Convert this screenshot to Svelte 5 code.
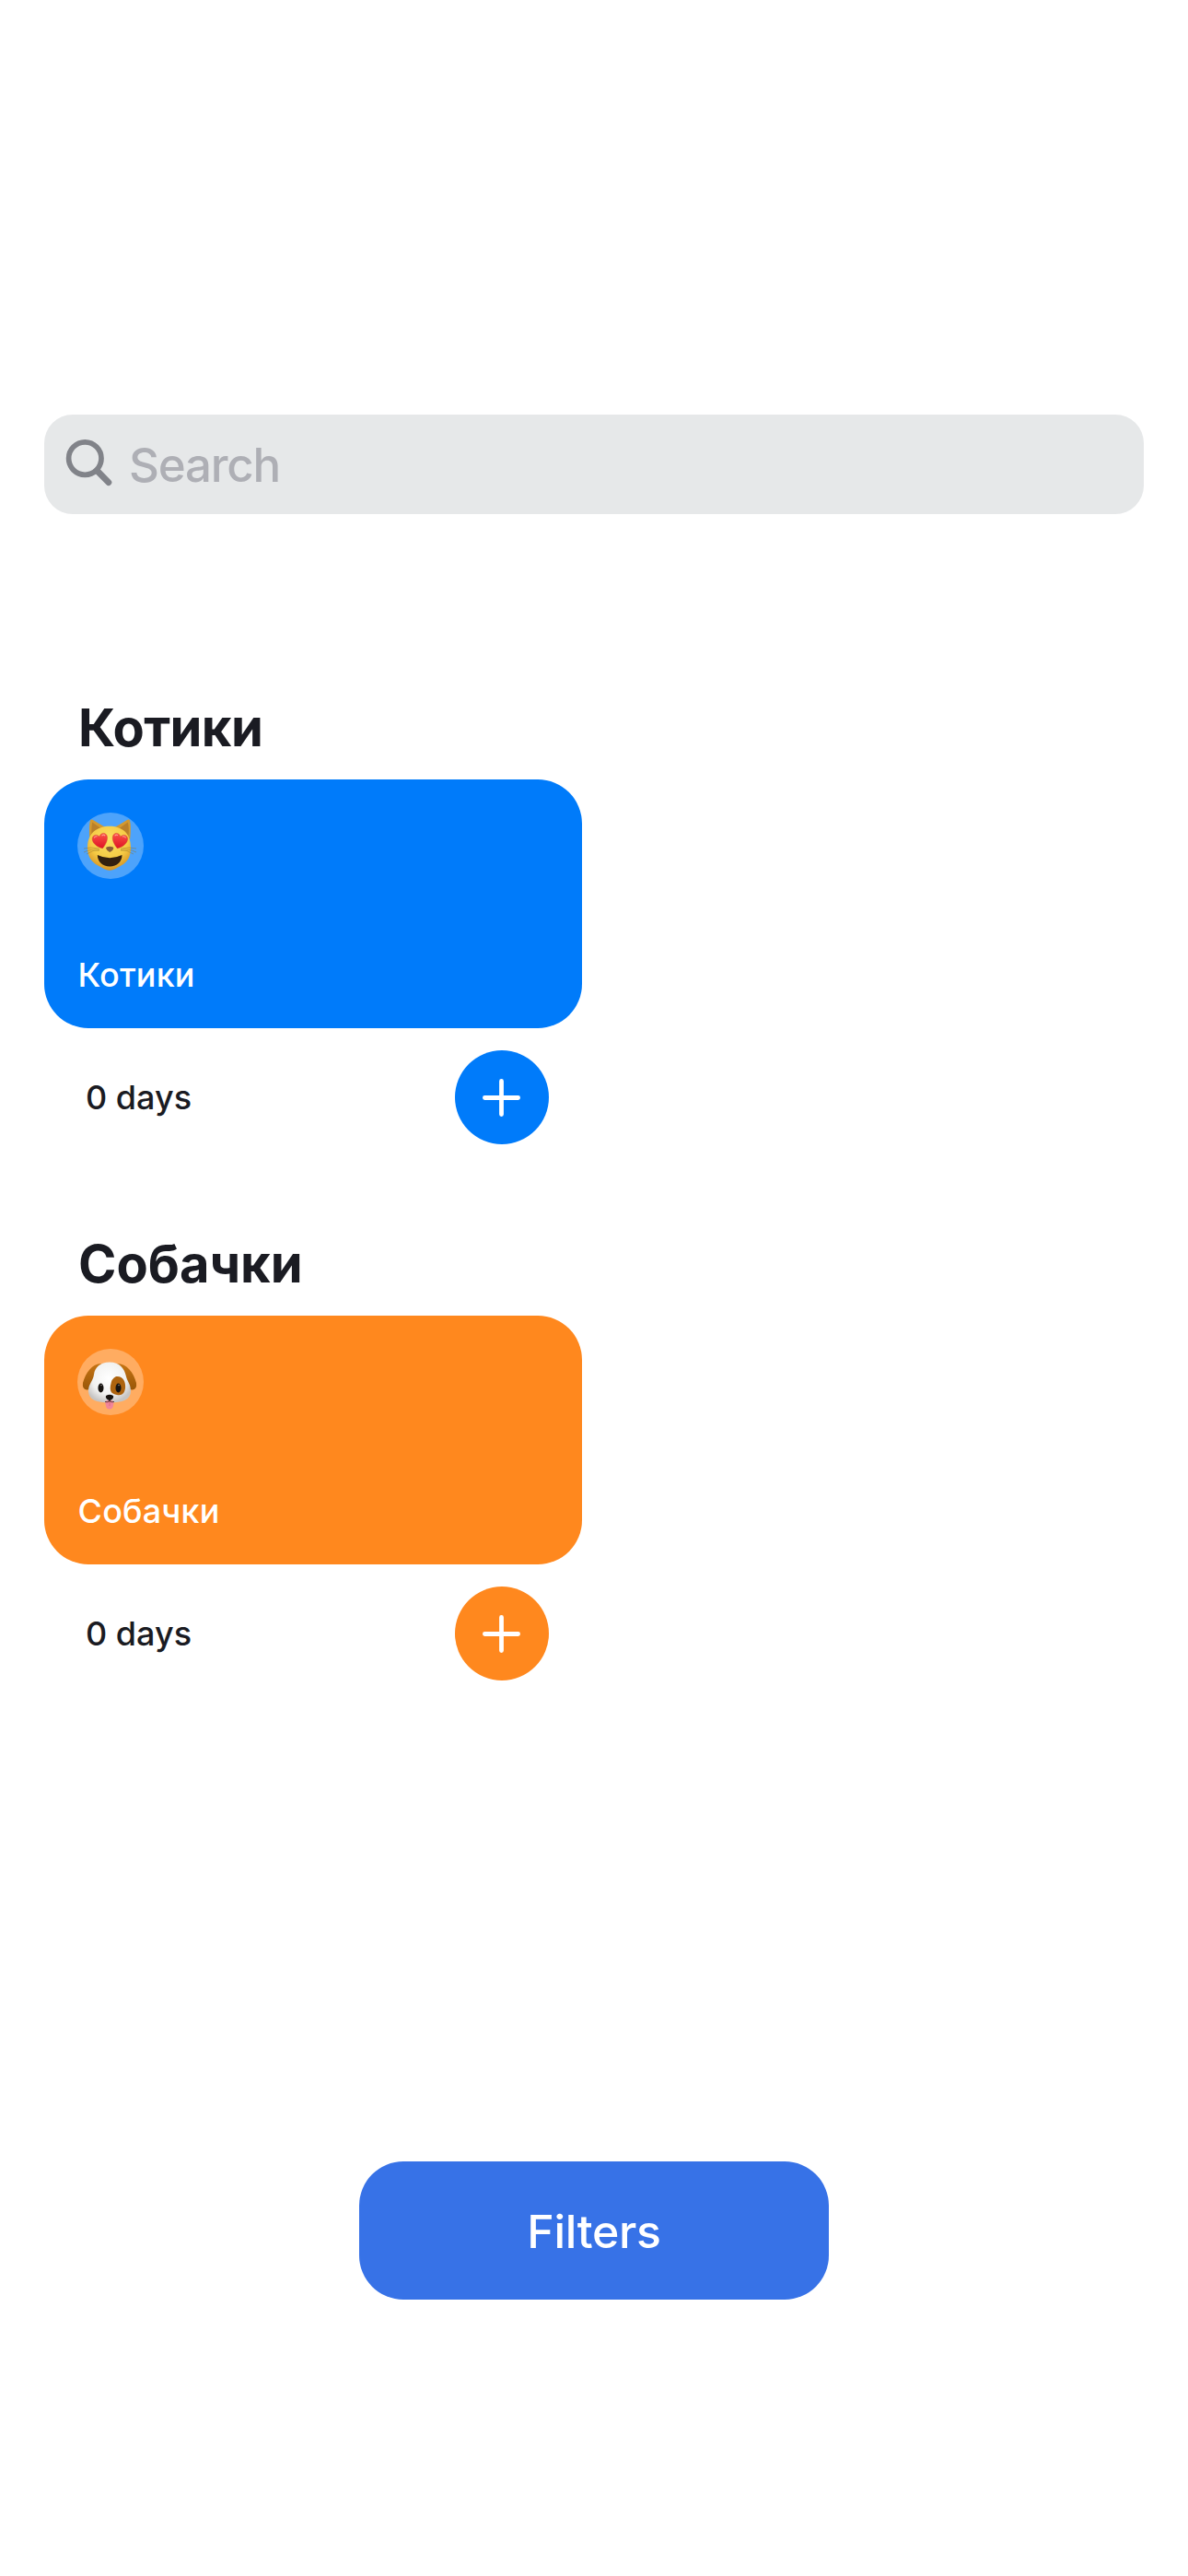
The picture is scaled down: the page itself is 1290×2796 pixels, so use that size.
<script>
  const categories = [
    { name: 'Котики', kind: 'cat', tone: 'blue', days: 0 },
    { name: 'Собачки', kind: 'dog', tone: 'orange', days: 0 }
  ];
</script>

{#snippet cat()}
  <svg class="emoji" viewBox="0 0 72 72" aria-label="Cat">
    <defs>
      <radialGradient id="cat-face" cx=".5" cy=".3" r=".72">
        <stop offset="0" stop-color="#fbe062" />
        <stop offset=".6" stop-color="#f6cb45" />
        <stop offset="1" stop-color="#d38f22" />
      </radialGradient>
      <linearGradient id="cat-heart" x1="0" y1="0" x2="0" y2="1">
        <stop offset="0" stop-color="#fb5148" />
        <stop offset="1" stop-color="#df1425" />
      </linearGradient>
    </defs>
    <path d="M13.300 29 Q12.300 14 14.200 8 Q15 6.800 17 8 L32 17 ZM57.200 29 Q58.700 14 56.800 8 Q56 6.800 54 8 L39 17 Z" fill="#d3992f" />
    <path d="M15.500 25 Q15 16 16.300 10.500 L26 17.500 ZM55.500 25 Q56.500 16 54.700 10.500 L45 17.500 Z" fill="#b9802a" />
    <path d="M35 14.700 C48 14.700 58 22 58 37.500 C58 47.500 55 53.500 47.500 57.500 C43 60 39.500 62.700 35 62.700 C30.500 62.700 27 60 22.500 57.500 C15 53.500 11 47.500 11 37.500 C11 22 22 14.700 35 14.700Z" fill="url(#cat-face)" />
    <path d="M7 39 Q15 37 24 39 M7 43 Q16 38.500 24 40.500 M10 45 Q17 40 24 41 M64 39 Q56 37 47 39 M64 43 Q55 38.500 47 40.500 M61 45 Q54 40 47 41" fill="none" stroke="#927023" stroke-opacity=".75" stroke-width=".6" />
    <g fill="url(#cat-heart)" stroke="#c8392a" stroke-width=".4">
      <path d="M27.500 38.700 C21.500 37.500 16 33 16.200 28.200 C16.500 24 21.500 23.200 24 26.200 C24.800 22.300 29.500 20.900 31.700 24.300 C34 28.300 31 34.500 27.500 38.700Z" />
      <path d="M43.300 38.700 C49.300 37.500 54.800 33 54.600 28.200 C54.300 24 49.300 23.200 46.800 26.200 C46 22.300 41.300 20.900 39.100 24.300 C36.800 28.300 39.800 34.500 43.300 38.700Z" />
    </g>
    <path d="M18.500 27 Q19.500 25.500 21 25.800 M27 24.800 Q28.500 23.600 29.800 24.800 M41 24.800 Q42 23.600 43.500 24.500 M49.500 25.800 Q51.500 25.500 52.300 27" fill="none" stroke="#ff9b8d" stroke-width="1.200" stroke-linecap="round" />
    <path d="M31 38.500 Q31.500 36.800 35.200 36.800 Q39 36.800 39.300 38.500 Q39 41 35.200 43 Q31.500 41 31 38.500Z" fill="#875e38" />
    <path d="M21.800 46 Q35.200 52.500 48.500 46 C48.500 53.500 43 58.500 35.200 58.500 C27.500 58.500 22 53.500 21.800 46Z" fill="#33200f" />
  </svg>
{/snippet}

{#snippet dog()}
  <svg class="emoji" viewBox="0 0 72 72" aria-label="Dog">
    <defs>
      <radialGradient id="dog-face" cx=".48" cy=".4" r=".6">
        <stop offset="0" stop-color="#fff" />
        <stop offset=".65" stop-color="#f2f2f1" />
        <stop offset="1" stop-color="#c6c4c3" />
      </radialGradient>
      <linearGradient id="dog-ear" x1="0" y1="0" x2="0" y2="1">
        <stop offset="0" stop-color="#c57413" />
        <stop offset="1" stop-color="#9a5708" />
      </linearGradient>
    </defs>
    <path d="M26 16 C16 16 9 26 6 37 Q5 44 10 44.500 Q16 45 18 37ZM43 16 C54 16 61 26 64 37 Q65 44 60 44.500 Q54 45 52 37Z" fill="url(#dog-ear)" />
    <path d="M35 14.500 C46 14.500 51 21 53 30 C54 35 58 38 58 46 C58 55 49 58.500 35 58.500 C21 58.500 12 55 12 46 C12 38 17 35 18 28 C19 20 25 14.500 35 14.500Z" fill="url(#dog-face)" />
    <path d="M42 30 C49 29 53 35 52 43 C51 48 49 51 43 50 C37 49 35 46 36 40 Q37 32 42 30Z" fill="#ad630f" />
    <ellipse cx="25.500" cy="42.500" rx="3" ry="5" fill="#171311" />
    <ellipse cx="44.500" cy="42.500" rx="3" ry="5" fill="#171311" />
    <circle cx="26" cy="39.500" r=".8" fill="#85817e" />
    <circle cx="45" cy="39.500" r=".8" fill="#85817e" />
    <path d="M30 57 Q35 54 39.500 57 L39 62 Q38 65.500 35 65.500 Q31.500 65.500 31 62Z" fill="#f28599" />
    <path d="M35 57 V62" stroke="#d86679" stroke-width=".8" />
    <path d="M31 51 Q35 48.500 39 51 Q40 54 35.500 56 L35 58 L34.500 56 Q30 54 31 51Z" fill="#17120f" />
    <path d="M30 57.500 Q33 58.500 35 56.500 Q37 58.500 40 57.500" fill="none" stroke="#332722" stroke-width=".8" />
  </svg>
{/snippet}

<main>
  <label class="search">
    <svg viewBox="0 0 54 54" aria-hidden="true">
      <circle cx="22.300" cy="25.600" r="17.700" />
      <path d="M35.500 39 L47.900 51.600" />
    </svg>
    <span>Search</span>
  </label>

  <div class="list">
    {#each categories as item}
      <section class={item.tone}>
        <h2 class={item.kind}>{item.name}</h2>
        <article>
          <div class="badge">
            {#if item.kind === 'cat'}{@render cat()}{:else}{@render dog()}{/if}
          </div>
          <p>{item.name}</p>
        </article>
        <footer>
          <span>{item.days} days</span>
          <button class="add" aria-label="Add day">
            <svg viewBox="0 0 102 102"><path d="M32.400 51.500 H68.600 M50.500 33.400 V69.600" /></svg>
          </button>
        </footer>
      </section>
    {/each}
  </div>

  <button class="filters">Filters</button>
</main>

<style>
  :global(body) {
    margin: 0;
    background: #fff;
  }
  main {
    box-sizing: border-box;
    width: 1290px;
    height: 2796px;
    padding: 450px 48px 300px;
    display: flex;
    flex-direction: column;
    background: #fff;
    color: #1a1b22;
    font-family: Inter, 'Liberation Sans', sans-serif;
  }
  button {
    border: 0;
    padding: 0;
    font: inherit;
  }
  .search {
    box-sizing: border-box;
    height: 108px;
    border-radius: 31px;
    padding-left: 22px;
    display: flex;
    align-items: center;
    background: #e6e8e9;
    color: #aeafb5;
    font-size: 51px;
    line-height: 62px;
    font-weight: 450;
  }
  .search svg {
    width: 54px;
    height: 54px;
    margin-top: -10px;
    overflow: visible;
    fill: none;
    stroke: #818389;
    stroke-width: 5.7;
    stroke-linecap: round;
  }
  .search path {
    stroke-width: 6.8;
  }
  .search span {
    margin: 2px 0 0 16px;
    letter-spacing: -1.2px;
  }
  .list {
    margin-top: 198px;
    display: flex;
    flex-direction: column;
  }
  section {
    width: 584px;
    height: 582px;
    display: flex;
    flex-direction: column;
  }
  .blue { --tone: #007bfa; }
  .orange { --tone: #ff881e; }
  h2 {
    box-sizing: border-box;
    height: 90px;
    margin: 0;
    padding: 0 0 0 37px;
    font-size: 56px;
    line-height: 68px;
    font-weight: 700;
  }
  h2.cat {
    letter-spacing: -0.6px;
  }
  article {
    box-sizing: border-box;
    height: 270px;
    padding: 36px 36px 37px;
    border-radius: 48px;
    display: flex;
    flex-direction: column;
    justify-content: space-between;
    background: var(--tone);
    color: #fff;
  }
  .badge {
    width: 72px;
    height: 72px;
    border-radius: 50%;
    background: rgb(255 255 255 / 30%);
  }
  .emoji {
    display: block;
    width: 72px;
    height: 72px;
  }
  p {
    margin: 0;
    padding-left: 0.6px;
    font-size: 36px;
    line-height: 42px;
    font-weight: 500;
    letter-spacing: 0.15px;
  }
  footer {
    margin-top: 24px;
    height: 102px;
    padding: 0 36px;
    display: flex;
    align-items: center;
    justify-content: space-between;
    font-size: 36px;
    line-height: 42px;
    font-weight: 500;
  }
  footer span {
    padding-left: 9px;
  }
  .add {
    width: 102px;
    height: 102px;
    border-radius: 50%;
    background: var(--tone);
  }
  .add svg {
    display: block;
    fill: none;
    stroke: #fff;
    stroke-width: 4.8;
    stroke-linecap: round;
  }
  .filters {
    box-sizing: border-box;
    width: 510px;
    height: 150px;
    margin: auto auto 0;
    padding-top: 2px;
    border-radius: 48px;
    background: #3772e7;
    color: #fff;
    font-size: 50px;
    line-height: 60px;
    font-weight: 450;
    letter-spacing: -0.3px;
  }
</style>
